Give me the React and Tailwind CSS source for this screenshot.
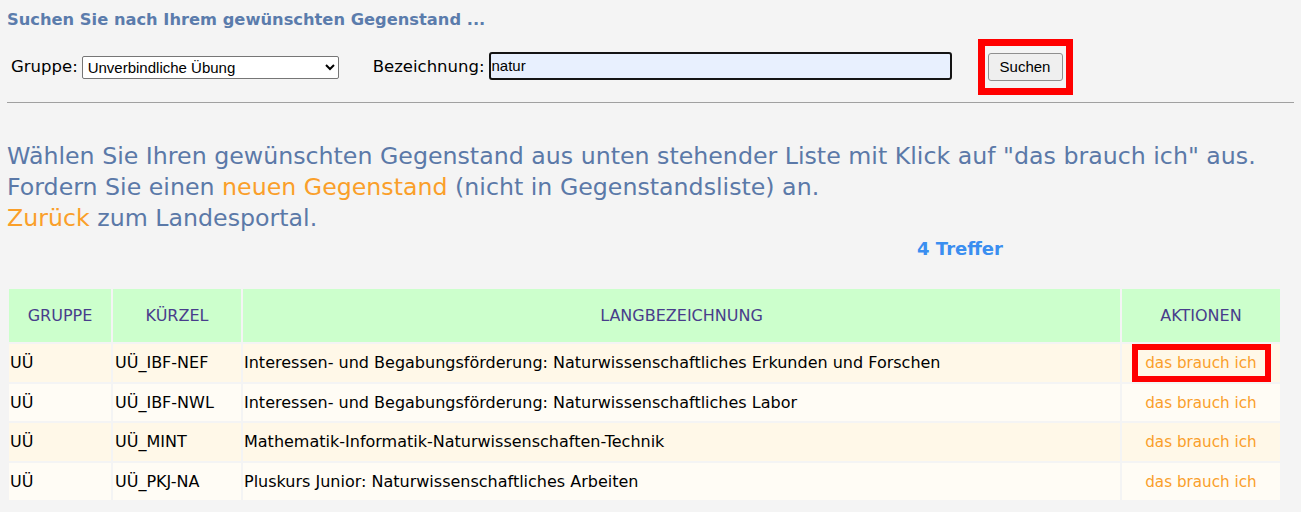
import { useState } from 'react';

const rows = [
  { gruppe: 'UÜ', kurz: 'UÜ_IBF-NEF', lang: 'Interessen- und Begabungsförderung: Naturwissenschaftliches Erkunden und Forschen', marked: true },
  { gruppe: 'UÜ', kurz: 'UÜ_IBF-NWL', lang: 'Interessen- und Begabungsförderung: Naturwissenschaftliches Labor' },
  { gruppe: 'UÜ', kurz: 'UÜ_MINT', lang: 'Mathematik-Informatik-Naturwissenschaften-Technik' },
  { gruppe: 'UÜ', kurz: 'UÜ_PKJ-NA', lang: 'Pluskurs Junior: Naturwissenschaftliches Arbeiten' },
];

export default function App() {
  const [gruppe, setGruppe] = useState('UV');
  const [query, setQuery] = useState('natur');

  return (
    <div className="min-h-[512px] bg-[#f4f4f4] font-['DejaVu_Sans',sans-serif] text-black">
      <div className="px-[7px] pt-[8px]">
        <h1 className="text-[16.3px] font-bold leading-[24px] text-[#5b7cac]">Suchen Sie nach Ihrem gewünschten Gegenstand ...</h1>

        <form className="mt-[7px] flex h-[56px] items-center" onSubmit={(e) => e.preventDefault()}>
          <label className="ml-[4px] flex items-center text-[16.5px]">
            Gruppe:
            <select
              className="ml-[4px] h-[23px] w-[257px] rounded-[2px] border border-[#767676] bg-white pl-[1px] font-['Liberation_Sans',sans-serif] text-[15px]"
              value={gruppe}
              onChange={(e) => setGruppe(e.target.value)}
            >
              <option value="UV">Unverbindliche Übung</option>
              <option value="PF">Pflichtgegenstand</option>
              <option value="FR">Freigegenstand</option>
            </select>
          </label>
          <label className="ml-[34px] flex items-center text-[16.5px]">
            Bezeichnung:
            <input
              className="ml-[4px] mb-[3px] h-[28px] w-[463px] rounded-[3px] border-2 border-[#141414] bg-[#e8f0fe] px-[1px] font-['Liberation_Sans',sans-serif] text-[15px] outline-none"
              value={query}
              onChange={(e) => setQuery(e.target.value)}
            />
          </label>
          <div className="ml-[26px] flex h-[56px] w-[95px] items-center justify-center border-[7px] border-[#ff0000]">
            <button className="h-[28px] w-[75px] rounded-[3px] border border-[#8f8f8f] bg-[#efefef] font-['Liberation_Sans',sans-serif] text-[15px]">Suchen</button>
          </div>
        </form>

        <hr className="mt-[7px] border-t border-[#a0a0a0]" />

        <div className="mt-[38px] text-[23.7px] leading-[31px] text-[#5b79a8]">
          <p>Wählen Sie Ihren gewünschten Gegenstand aus unten stehender Liste mit Klick auf "das brauch ich" aus.</p>
          <p>
            Fordern Sie einen <a href="#" className="text-[#fa9f2a]">neuen Gegenstand</a> (nicht in Gegenstandsliste) an.
          </p>
          <p>
            <a href="#" className="text-[#fa9f2a]">Zurück</a> zum Landesportal.
          </p>
        </div>
      </div>

      <div className="grid w-[1280px] grid-cols-2">
        <div />
        <div className="text-center text-[18px] font-bold leading-[30px] text-[#3a8ef0]">4 Treffer</div>
      </div>

      <table className="ml-[7px] mt-[23px] w-[1275px] border-separate border-spacing-[2px] text-[16px]">
        <thead>
          <tr className="h-[53px] bg-[#ccffcc] text-[16px] text-[#483d8b]">
            <th className="w-[102px] font-normal">GRUPPE</th>
            <th className="w-[128px] font-normal">KÜRZEL</th>
            <th className="font-normal">LANGBEZEICHNUNG</th>
            <th className="w-[158px] font-normal">AKTIONEN</th>
          </tr>
        </thead>
        <tbody>
          {rows.map((r, i) => (
            <tr key={r.kurz} className={i % 2 === 0 ? 'h-[38px] bg-[#fff8e8]' : 'h-[37px] bg-[#fffcf5]'}>
              <td className="px-[1px]">{r.gruppe}</td>
              <td className="px-[2px]">{r.kurz}</td>
              <td className="px-[1px]">{r.lang}</td>
              <td className="p-0 text-center">
                {r.marked ? (
                  <div className="mx-auto flex h-[38px] w-[139px] items-center justify-center border-[6px] border-[#ff0000]">
                    <a href="#" className="text-[15.2px] text-[#fa9f2a]">das brauch ich</a>
                  </div>
                ) : (
                  <a href="#" className="text-[15.2px] text-[#fa9f2a]">das brauch ich</a>
                )}
              </td>
            </tr>
          ))}
        </tbody>
      </table>
    </div>
  );
}
